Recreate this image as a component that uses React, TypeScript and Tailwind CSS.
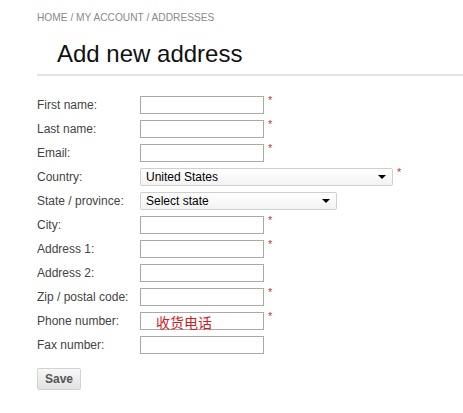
import React from 'react';

type Field = {
    label: string;
    kind: 'text' | 'select';
    required?: boolean;
    width?: string;
    value?: string;
    red?: boolean;
};

const fields: Field[] = [
    { label: 'First name:', kind: 'text', required: true },
    { label: 'Last name:', kind: 'text', required: true },
    { label: 'Email:', kind: 'text', required: true },
    { label: 'Country:', kind: 'select', required: true, width: 'w-[253px]', value: 'United States' },
    { label: 'State / province:', kind: 'select', width: 'w-[197px]', value: 'Select state' },
    { label: 'City:', kind: 'text', required: true },
    { label: 'Address 1:', kind: 'text', required: true },
    { label: 'Address 2:', kind: 'text' },
    { label: 'Zip / postal code:', kind: 'text', required: true },
    { label: 'Phone number:', kind: 'text', required: true, value: '收货电话', red: true },
    { label: 'Fax number:', kind: 'text' },
];

function FakeSelect({ width, value }: { width?: string; value?: string }) {
    return (
        <div
            className={`${width} flex h-[18px] items-center justify-between rounded-[2px] border border-[#cfcfcf] bg-gradient-to-b from-white to-[#f3f3f3] pr-[6px] pl-[5px]`}
        >
            <span className="text-[12px] leading-none text-black">{value}</span>
            <span className="h-0 w-0 border-x-[4px] border-t-[4px] border-x-transparent border-t-black" />
        </div>
    );
}

export default function App() {
    return (
        <div className="min-h-[413px] bg-white font-['Liberation_Sans',Arial,sans-serif]">
            {/* breadcrumb */}
            <div className="pt-[12px] pl-[37px] text-[10.2px] leading-[12px] text-[#8a8a8a]">
                HOME / MY ACCOUNT / ADDRESSES
            </div>

            {/* title */}
            <div className="mt-[15px] ml-[37px] border-b-2 border-[#e3e3e3] pb-[5px] pl-[20px]">
                <h1 className="text-[24px] leading-[30px] text-[#111]">Add new address</h1>
            </div>

            {/* form */}
            <div className="mt-[17px] pl-[37px]">
                {fields.map((f) => (
                    <div key={f.label} className="flex h-[24px] items-center">
                        <div className="w-[103px] text-[12px] leading-none text-[#444]">{f.label}</div>
                        {f.kind === 'select' ? (
                            <FakeSelect width={f.width} value={f.value} />
                        ) : (
                            <div className="relative h-[18px] w-[124px] border border-[#a9a9a9] bg-white">
                                {f.value && (
                                    <span className="absolute bottom-[-1px] left-[15px] font-['Noto_Sans_CJK_SC',sans-serif] text-[14px] leading-[16px] text-[#d0201f]">
                                        {f.value}
                                    </span>
                                )}
                            </div>
                        )}
                        {f.required && (
                            <span className="ml-[4px] self-start pt-[2px] text-[11px] leading-none text-[#c8323c]">*</span>
                        )}
                    </div>
                ))}

                <button className="mt-[11px] h-[22px] w-[44px] rounded-[2px] border border-[#d2d2d2] bg-gradient-to-b from-[#f7f7f7] to-[#e2e2e2] text-[12px] font-bold text-[#555]">
                    Save
                </button>
            </div>
        </div>
    );
}
